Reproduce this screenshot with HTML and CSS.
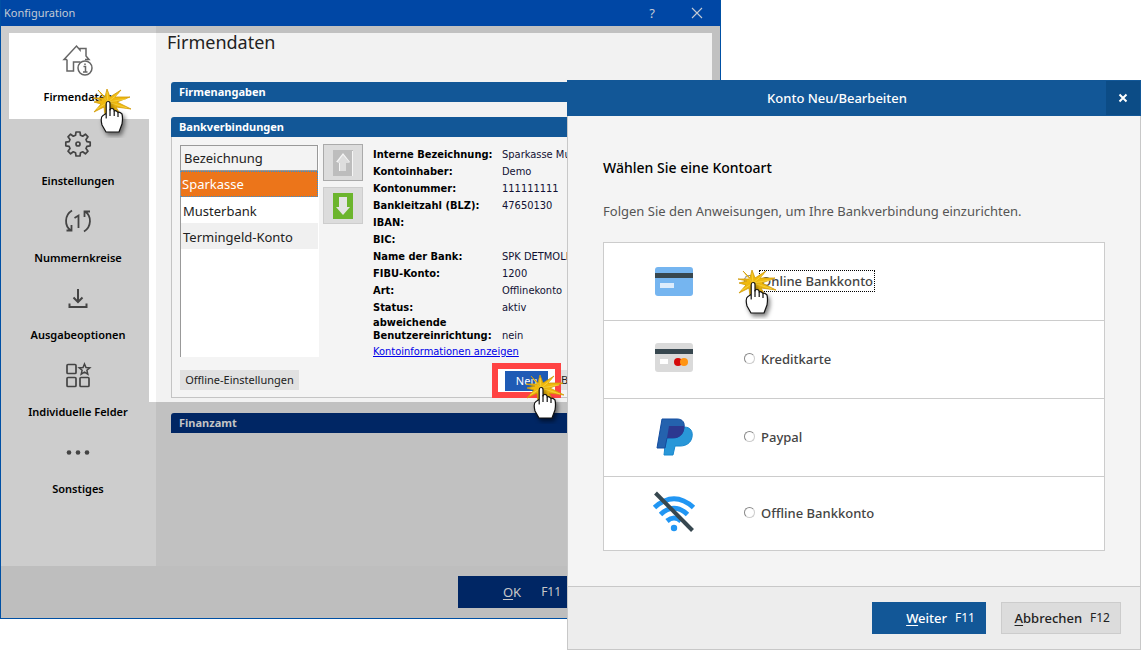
FILE: index.html
```html
<!DOCTYPE html>
<html lang="de">
<head>
<meta charset="utf-8">
<title>Konfiguration</title>
<link rel="stylesheet" href="styles.css">
</head>
<body>
<svg class="defs" aria-hidden="true">
  <symbol id="hand" viewBox="-16 -14 46 50">
    <path d="M0 0 L-10-12 L-3-5 L-1-13 L2-5 L13-12 L7-5 L22-5 L9 0 L23 7 L8 5 L12 12 L3 6 L-3 13 L-4 5 L-14 10 L-7 2 L-14 0 L-6-2 L-15-4 L-4-4Z" fill="#f0b90d" stroke="#d09a08" stroke-width=".8"/>
    <path d="M0 0 L-8-9 M0 0 L-1-10 M0 0 L11-9 M0 0 L18-3 M0 0 L19 6 M0 0 L-11 7" stroke="#f8d545" stroke-width=".8"/>
    <g class="hand-shape">
      <path d="M-1.8 16 V1.500 Q-1.500-.5 0-.5 Q2-.5 2 1.500 V8 Q2 6.500 4 6.500 Q6 6.500 6.200 9 Q8 7.800 10 10.500 Q11.500 9.500 14 12 Q15 16 14 22 L11 30 H-2 L-6 23 Q-8 15-5 13.500 Q-3 12.500-1.800 11Z" fill="#fff" stroke="#111" stroke-width="1.200" stroke-linejoin="round"/>
      <path d="M2 7 V14 M6.200 9 V14 M10 10.500 V15" fill="none" stroke="#111" stroke-width="1.200"/>
    </g>
  </symbol>
</svg>
<div class="desktop">
  <section class="config">
    <header class="config-title">
      <h1>Konfiguration</h1>
      <button class="title-btn" aria-label="Hilfe">?</button>
      <button class="title-btn" aria-label="Schließen"><svg width="12" height="12" viewBox="0 0 12 12"><path d="M1 1 11 11M11 1 1 11" stroke="#c4cbd4" stroke-width="1.100"/></svg></button>
    </header>
    <div class="config-body">
      <nav class="sidebar">
        <button class="nav-item active">
          <svg class="nav-icon" viewBox="0 0 36 36" fill="none" stroke="#666" stroke-width="1.500"><path d="M7 17.500H4L16.500 4 20 8V6.500h6V14l3 3.500h-4M7 17.500V29h6.500V20h7"/><circle cx="25" cy="26" r="7"/><path d="M23.500 24.500h2V30M23 30h4.500M25 21.500v1.500"/></svg>
          <span>Firmendaten</span>
          <svg class="pointer" aria-hidden="true"><use href="#hand"/></svg>
        </button>
        <button class="nav-item">
          <svg class="nav-icon" viewBox="0 0 36 36" fill="none" stroke="#444" stroke-width="1.700" stroke-linejoin="round"><path d="M16 6h4l.5 3.300 2.200.9 2.700-2 2.600 2.600-2 2.700.9 2.200 3.300.5v3.600l-3.300.5-.9 2.200 2 2.700-2.600 2.600-2.700-2-2.200.9L20 30h-4l-.5-3.300-2.200-.9-2.700 2L8 25.200l2-2.700-.9-2.200-3.300-.5v-3.600l3.300-.5.9-2.200-2-2.700 2.600-2.600 2.700 2 2.200-.9z"/><circle cx="18" cy="18" r="2"/></svg>
          <span>Einstellungen</span>
        </button>
        <button class="nav-item">
          <svg class="nav-icon" viewBox="0 0 36 36" fill="none" stroke="#444" stroke-width="1.800"><path d="M12 7.500C4.500 12 4 23 11 27.500M11.500 22v5.500H6.500M24 28.500C31.500 24 32 13 25 8.500M24.500 14V8.500H30M14.500 15 18.500 12.500V25"/></svg>
          <span>Nummernkreise</span>
        </button>
        <button class="nav-item">
          <svg class="nav-icon" viewBox="0 0 36 36" fill="none" stroke="#444" stroke-width="2"><path d="M18 9v13M13.500 17.500 18 22l4.500-4.500M9.500 23.500V27h17v-3.500"/></svg>
          <span>Ausgabeoptionen</span>
        </button>
        <button class="nav-item">
          <svg class="nav-icon" viewBox="0 0 36 36" fill="none" stroke="#444" stroke-width="1.700"><rect x="7" y="7.500" width="9" height="9" rx="1"/><rect x="7" y="20.500" width="9" height="9" rx="1"/><rect x="20" y="20.500" width="9" height="9" rx="1"/><path d="m24.500 7 1.500 3.500 3.800.3-2.900 2.500.9 3.900-3.300-2.100-3.300 2.100.9-3.900-2.900-2.500 3.800-.3z" stroke-width="1.500"/></svg>
          <span>Individuelle Felder</span>
        </button>
        <button class="nav-item">
          <svg class="nav-icon" viewBox="0 0 36 36" fill="#444"><circle cx="9" cy="18.500" r="2.300"/><circle cx="18" cy="18.500" r="2.300"/><circle cx="27" cy="18.500" r="2.300"/></svg>
          <span>Sonstiges</span>
        </button>
      </nav>
      <div class="strip"></div>
      <main class="content">
        <div class="lit">
          <h2>Firmendaten</h2>
          <h3 class="group-head">Firmenangaben</h3>
          <section class="group">
            <h3 class="group-head">Bankverbindungen</h3>
            <div class="group-body">
              <div class="bank">
                <div class="table-box">
                  <table>
                    <thead><tr><th>Bezeichnung</th></tr></thead>
                    <tbody>
                      <tr class="selected"><td>Sparkasse</td></tr>
                      <tr><td>Musterbank</td></tr>
                      <tr class="alt"><td>Termingeld-Konto</td></tr>
                    </tbody>
                  </table>
                </div>
                <div class="order">
                  <button class="order-btn up" aria-label="Nach oben"><svg width="20" height="26" viewBox="0 0 20 26"><path fill="#bdbdbd" d="M0 0h20v26H0z"/><path fill="#f5f5f5" d="M19 1h1v25h-1zM10 3 3 12h3v9h7v-9h4z"/><path fill="#ddd" d="m10 5-6 8h3v8h6v-8h4z"/></svg></button>
                  <button class="order-btn" aria-label="Nach unten"><svg width="20" height="26" viewBox="0 0 20 26"><path fill="#6cb52d" d="M0 0h20v26H0z"/><path fill="#e4e4e4" d="M6 4h8v10h3l-7 8-7-8h3z"/></svg></button>
                </div>
                <div class="details">
                  <dl>
                    <dt>Interne Bezeichnung:</dt><dd>Sparkasse Mu</dd>
                    <dt>Kontoinhaber:</dt><dd>Demo</dd>
                    <dt>Kontonummer:</dt><dd>111111111</dd>
                    <dt>Bankleitzahl (BLZ):</dt><dd>47650130</dd>
                    <dt>IBAN:</dt><dd></dd>
                    <dt>BIC:</dt><dd></dd>
                    <dt>Name der Bank:</dt><dd>SPK DETMOLD</dd>
                    <dt>FIBU-Konto:</dt><dd>1200</dd>
                    <dt>Art:</dt><dd>Offlinekonto</dd>
                    <dt>Status:</dt><dd>aktiv</dd>
                    <dt class="two-line">abweichende<br>Benutzereinrichtung:</dt><dd class="last">nein</dd>
                  </dl>
                  <a href="#konto">Kontoinformationen anzeigen</a>
                </div>
              </div>
              <div class="actions">
                <button class="small-btn">Offline-Einstellungen</button>
                <span class="marked">
                  <button class="small-btn new">Neu</button>
                  <svg class="pointer" aria-hidden="true"><use href="#hand"/></svg>
                </span>
                <button class="small-btn edit">B</button>
              </div>
            </div>
          </section>
        </div>
        <h3 class="group-head dimmed">Finanzamt</h3>
      </main>
    </div>
    <footer class="config-foot">
      <button class="ok"><span><u>O</u>K</span><kbd>F11</kbd></button>
    </footer>
  </section>

  <section class="dialog" role="dialog" aria-labelledby="dialog-title">
    <header class="dialog-title">
      <h2 id="dialog-title">Konto Neu/Bearbeiten</h2>
      <button class="close" aria-label="Schließen"><svg width="10" height="10" viewBox="0 0 10 10"><path d="m1.500 1.500 7 7m0-7-7 7" stroke="#fff" stroke-width="2"/></svg></button>
    </header>
    <form class="dialog-body">
      <h3>Wählen Sie eine Kontoart</h3>
      <p>Folgen Sie den Anweisungen, um Ihre Bankverbindung einzurichten.</p>
      <div class="options">
        <div class="option focused">
          <svg class="option-icon" viewBox="0 0 44 44"><rect x="3" y="8" width="38" height="29" rx="3" fill="#75b5f0"/><path fill="#37474f" d="M3 14h38v5H3z"/><path fill="#dcecfc" d="M8 24h14v5H8z"/></svg>
          <input type="radio" name="art" id="online"><label for="online">Online Bankkonto</label>
          <svg class="pointer" aria-hidden="true"><use href="#hand"/></svg>
        </div>
        <div class="option">
          <svg class="option-icon" viewBox="0 0 44 44"><rect x="3" y="6" width="38" height="29" rx="3" fill="#dadada"/><path fill="#37474f" d="M3 12h38v5H3z"/><path fill="#fff" d="M8 22h8v5H8z"/><circle cx="26" cy="25" r="4" fill="#d50b0b"/><circle cx="32" cy="25" r="4" fill="#ff9412"/></svg>
          <input type="radio" name="art" id="kredit"><label for="kredit">Kreditkarte</label>
        </div>
        <div class="option">
          <svg class="option-icon" viewBox="0 0 44 44"><path d="M15 12h17c7 0 9 5 8 10-1 6-6 9-12 9h-5l-2 9h-9z" fill="#2997d8" stroke="#1687ce"/><path d="M10 4h15c6 0 8 4 7 9-1 6-5 10-11 10h-6l-2 10H5z" fill="#2462ae" stroke="#124ca0"/><path d="M17 11h15c1 6-3 12-10 12h-7z" fill="#2c3890"/></svg>
          <input type="radio" name="art" id="paypal"><label for="paypal">Paypal</label>
        </div>
        <div class="option">
          <svg class="option-icon" viewBox="0 0 44 44" fill="none" stroke="#2196f3" stroke-width="5"><path d="M2.500 16.500Q22-1 41.500 16.500M8.500 23.500Q22 11 35.500 23.500M15 30Q22 24 29 30"/><circle cx="22" cy="37" r="3.200" fill="#2196f3" stroke="none"/><path d="M3.500 2 40.500 39.500" stroke="#37474f" stroke-width="4"/></svg>
          <input type="radio" name="art" id="offline"><label for="offline">Offline Bankkonto</label>
        </div>
      </div>
    </form>
    <footer class="dialog-foot">
      <button class="primary"><span><u>W</u>eiter</span><kbd>F11</kbd></button>
      <button class="secondary"><span><u>A</u>bbrechen</span><kbd>F12</kbd></button>
    </footer>
  </section>
</div>
</body>
</html>
```
FILE: styles.css
```css
* { box-sizing: border-box; }
body {
  margin: 0;
  background: #fff;
  font: 13px/20px "Noto Sans", "Open Sans", sans-serif;
  color: #222;
}
h1, h2, h3, p, dl, dd { margin: 0; font-weight: 400; }
button {
  padding: 0;
  border: 0;
  background: none;
  color: inherit;
  font: inherit;
}
kbd { font: inherit; font-size: 12px; }
u { text-underline-offset: 2px; }
.defs { position: absolute; width: 0; height: 0; }
.hand-shape { filter: drop-shadow(2px 3px 2px rgba(0, 0, 0, .5)); }
.pointer {
  position: absolute;
  width: 46px;
  height: 50px;
  overflow: visible;
  pointer-events: none;
  z-index: 2;
}
.desktop { position: relative; min-height: 100vh; }

.config {
  display: flex;
  flex-direction: column;
  width: 63.2%;
  border: 1px solid #0050a4;
  border-top: 0;
  background: #bebebe;
}
.config-title {
  display: flex;
  align-items: center;
  height: 26px;
  padding: 0 8px 0 3px;
  background: #0047a5;
  color: #c4cbd4;
}
.config-title h1 { flex: 1; font-size: 11px; }
.title-btn { display: grid; place-items: center; width: 30px; }
.title-btn + .title-btn { margin-left: 15px; }
.config-body { display: flex; min-height: 540px; background: #c1c1c1; }
.sidebar { width: 148px; padding: 7px 0 0 8px; background: #cdcdcd; }
.nav-item {
  position: relative;
  display: flex;
  flex-direction: column;
  align-items: center;
  gap: 9px;
  width: 100%;
  height: 77px;
  padding: 7px 2px 0 0;
  color: #000;
  font-size: 11px;
  font-weight: 600;
}
.nav-item.active { height: 86px; padding-top: 9px; background: #fff; }
.nav-item .pointer { left: 83px; top: 55px; }
.nav-icon { width: 36px; height: 36px; flex: none; }
.strip {
  width: 7px;
  background: linear-gradient(#fff, #fff) 0 7px / 100% 369px no-repeat #cdcdcd;
}
.content { flex: 1; min-width: 0; padding: 7px 8px 0 0; }
.lit { padding: 0 0 4px 15px; background: #f2f2f2; }
.lit h2 {
  height: 49px;
  margin-left: -4px;
  font-size: 18px;
  line-height: 18px;
}
.group-head {
  height: 20px;
  padding-left: 8px;
  border-top-left-radius: 3px;
  background: #125797;
  color: #fff;
  font-size: 11px;
  font-weight: 700;
}
.group { margin-top: 15px; }
.group-body {
  padding: 7px 8px 6px;
  border: 1px solid #c4c4c4;
  border-top: 0;
  background: #f4f4f4;
}
.dimmed { margin: 11px 0 0 15px; background: #002664; color: #c4c4c4; }
.bank { display: flex; }
.table-box {
  width: 139px;
  height: 212px;
  margin-top: 1px;
  padding-right: 1px;
  background: linear-gradient(#999, #999) 0 0 / 1px 100% no-repeat #fff;
}
table { width: 100%; border-spacing: 0; }
th {
  height: 26px;
  padding: 0 3px;
  border: 1px solid #999;
  background: #f3f3f3;
  font-weight: 400;
  text-align: left;
}
td { height: 26px; padding: 1px 2px 0; border-left: 1px solid #999; }
.selected td {
  padding: 0 1px 1px;
  border: 1px dotted #2a91e0;
  border-left: 1px solid #999;
  background: #ec751a;
  color: #fff;
}
.alt td { background: #f0f0f0; }
.order { display: grid; gap: 6px; align-content: start; margin-left: 4px; }
.order-btn {
  display: grid;
  place-items: center;
  width: 40px;
  height: 37px;
  border: 1px solid #cdcdcd;
  background: #dcdcdc;
}
.order-btn.up { border-color: #aaa; }
.details {
  margin: 2px 0 0 10px;
  color: #000;
  font: 11px/17px "DejaVu Sans Condensed", "DejaVu Sans", sans-serif;
}
dl { display: grid; grid-template-columns: 129px auto; grid-auto-rows: minmax(17px, auto); }
dt { font-weight: 700; white-space: nowrap; }
dd { white-space: nowrap; color: #111133; }
.two-line { line-height: 13px; }
.last { align-self: end; line-height: 13px; }
.details a { display: block; margin-top: 1px; color: #0000e8; }
.actions { display: flex; margin-top: 10px; }
.small-btn {
  height: 20px;
  width: 119px;
  background: #e1e1e1;
  font-size: 11px;
}
.marked { position: relative; width: 43px; margin-left: 206px; }
.marked::before {
  content: "";
  position: absolute;
  inset: -7px -13px;
  border: 6px solid #ff4343;
  background: #fff;
}
.marked .new { position: relative; width: 43px; background: #1f5bb5; color: #fff; }
.marked .pointer { left: 20px; top: 4px; }
.edit { width: 40px; margin-left: 4px; padding-left: 9px; text-align: left; }
.config-foot { display: flex; justify-content: flex-end; padding: 10px 142px 10px 0; }
.ok {
  display: flex;
  align-items: center;
  justify-content: flex-end;
  gap: 20px;
  width: 120px;
  height: 32px;
  padding-right: 17px;
  background: #002664;
  color: #c8c8c8;
}

.dialog {
  position: absolute;
  top: 80px;
  left: 49.7%;
  right: 0;
  display: flex;
  flex-direction: column;
  border: 1px solid #c8c8c8;
  border-top: 0;
  background: #f4f4f4;
}
.dialog-title {
  display: flex;
  align-items: center;
  height: 36px;
  margin: 0 -1px;
  padding: 1px;
  background: #125797;
  color: #fff;
}
.dialog-title h2 { flex: 1; font-size: 13px; font-weight: 500; text-align: center; }
.close { display: grid; place-items: center; width: 34px; height: 34px; background: #0c4c86; }
.dialog-body { padding: 40px 35px 35px; font-weight: 500; }
.dialog-body h3 { color: #000; font-size: 14px; line-height: 24px; font-weight: 500; }
.dialog-body p { margin: 21px 0; color: #555; }
.options { border: 1px solid #ccc; background: #fff; }
.option {
  position: relative;
  display: flex;
  align-items: center;
  height: 78px;
  padding: 0 0 2px 48px;
  border-bottom: 1px solid #ccc;
}
.option:last-child { height: 73px; border-bottom: 0; }
.option-icon { width: 44px; height: 44px; }
.option input {
  appearance: none;
  width: 11px;
  height: 11px;
  margin: 0 5px 0 48px;
  border: 1px solid #ccc;
  border-top-color: #888;
  border-left-color: #888;
  border-radius: 50%;
  background: #fff;
}
.option label { padding: 0 1px; color: #444; }
.focused label { outline: 1px dotted #000; }
.option .pointer { left: 133px; top: 26px; }
.dialog-foot {
  display: flex;
  justify-content: flex-end;
  gap: 15px;
  padding: 15px 19px 15px;
  border-top: 1px solid #c8c8c8;
  background: #ededed;
}
.primary, .secondary {
  display: flex;
  align-items: center;
  justify-content: flex-end;
  gap: 8px;
  height: 32px;
  font-weight: 500;
}
.primary { width: 114px; padding-right: 11px; background: #125797; color: #fff; }
.secondary { width: 120px; padding-right: 10px; border: 1px solid #ccc; background: #dcdcdc; }
.dialog-foot kbd { font-weight: 400; }
```
